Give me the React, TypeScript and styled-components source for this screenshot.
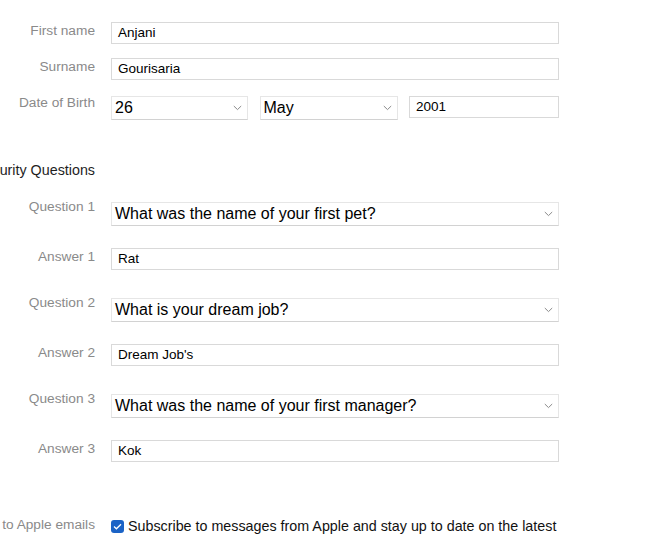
import React from "react";
import styled, { createGlobalStyle } from "styled-components";

const Global = createGlobalStyle`
  html, body { margin: 0; padding: 0; background: #ffffff; }
  body { font-family: "Liberation Sans", Arial, sans-serif; overflow: hidden; }
`;

const Page = styled.div`
  width: 652px;
  height: 537px;
  overflow: hidden;
  padding-top: 22px;
  box-sizing: border-box;
  display: flex;
  flex-direction: column;
`;

const Row = styled.div<{ $mt?: number }>`
  display: grid;
  grid-template-columns: 95px 448px;
  column-gap: 16px;
  align-items: start;
  margin-top: ${(p) => p.$mt ?? 0}px;
`;

const Label = styled.div<{ $offset?: number }>`
  display: flex;
  justify-content: flex-end;
  white-space: nowrap;
  font-size: 13.7px;
  line-height: 16px;
  color: #8a8a8a;
  margin-top: ${(p) => p.$offset ?? 1}px;
`;

const Heading = styled.div`
  display: flex;
  justify-content: flex-end;
  white-space: nowrap;
  font-size: 14.3px;
  line-height: 20px;
  color: #1e1e1e;
`;

const TextInput = styled.div`
  box-sizing: border-box;
  height: 22px;
  border: 1px solid #d9d9d9;
  background: #fff;
  padding: 0 6px;
  font-size: 13.5px;
  line-height: 20px;
  color: #000;
  white-space: nowrap;
  overflow: hidden;
`;

const SelectBox = styled.div`
  box-sizing: border-box;
  height: 24px;
  border: 1px solid #e6e6e6;
  border-bottom-color: #d2d2d2;
  background: #fff;
  padding: 0 5px 0 3px;
  display: flex;
  align-items: center;
  justify-content: space-between;
  font-size: 16px;
  color: #000;
  white-space: nowrap;
  overflow: hidden;
`;

const Chevron = styled.svg`
  width: 9px;
  height: 6px;
  flex: none;
`;

const DobGroup = styled.div`
  display: grid;
  grid-template-columns: 137px 138px 150px;
  justify-content: space-between;
`;

const CheckRow = styled.label`
  display: flex;
  align-items: center;
  gap: 4px;
  font-size: 14.3px;
  line-height: 18px;
  color: #111;
  white-space: nowrap;
  padding-top: 1px;
`;

const Check = styled.span`
  width: 13px;
  height: 13px;
  border-radius: 3px;
  background: #1b63c6;
  display: inline-flex;
  align-items: center;
  justify-content: center;
  flex: none;
`;

const Select = ({ value }: { value: string }) => (
  <SelectBox>
    <span>{value}</span>
    <Chevron viewBox="0 0 9 6">
      <path d="M0.8 1 L4.5 4.6 L8.2 1" fill="none" stroke="#8a8a8a" strokeWidth="1" />
    </Chevron>
  </SelectBox>
);

const questions = [
  { q: "What was the name of your first pet?", a: "Rat" },
  { q: "What is your dream job?", a: "Dream Job's" },
  { q: "What was the name of your first manager?", a: "Kok" },
];

export default function App() {
  return (
    <Page>
      <Global />
      <Row>
        <Label $offset={1}>First name</Label>
        <TextInput>Anjani</TextInput>
      </Row>
      <Row $mt={14}>
        <Label $offset={1}>Surname</Label>
        <TextInput>Gourisaria</TextInput>
      </Row>
      <Row $mt={16}>
        <Label $offset={-1}>Date of Birth</Label>
        <DobGroup>
          <Select value="26" />
          <Select value="May" />
          <TextInput>2001</TextInput>
        </DobGroup>
      </Row>
      <Row $mt={40}>
        <Heading>Security Questions</Heading>
      </Row>
      {questions.map((item, i) => (
        <React.Fragment key={i}>
          <Row $mt={i === 0 ? 22 : 28}>
            <Label $offset={-3}>Question {i + 1}</Label>
            <Select value={item.q} />
          </Row>
          <Row $mt={22}>
            <Label $offset={1}>Answer {i + 1}</Label>
            <TextInput>{item.a}</TextInput>
          </Row>
        </React.Fragment>
      ))}
      <Row $mt={54}>
        <Label $offset={1}>Subscribe to Apple emails</Label>
        <CheckRow>
          <Check>
            <svg width="9" height="7" viewBox="0 0 9 7">
              <path d="M1 3.6 L3.4 5.8 L8 1.2" fill="none" stroke="#fff" strokeWidth="1.3" />
            </svg>
          </Check>
          Subscribe to messages from Apple and stay up to date on the latest
        </CheckRow>
      </Row>
    </Page>
  );
}
